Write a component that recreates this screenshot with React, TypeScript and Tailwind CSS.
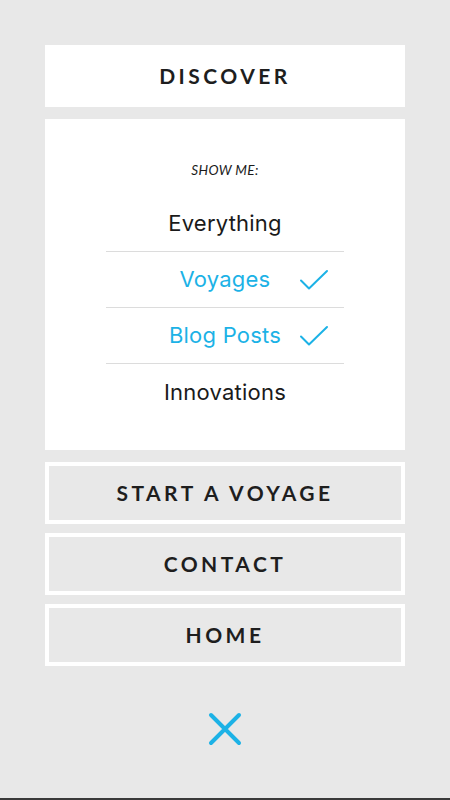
import React from "react";

const font = { fontFamily: "Lato, 'Open Sans', 'Liberation Sans', sans-serif" };
const rowFont = { fontFamily: "Inter, 'Open Sans', 'Liberation Sans', sans-serif", letterSpacing: "0.01em" };

function Check() {
  return (
    <svg width="30" height="22" viewBox="0 0 30 22" fill="none" className="absolute right-[15px] top-1/2 -translate-y-1/2">
      <path d="M2 11.5 L10 19.5 L28 2" stroke="#1cb2e6" strokeWidth="2" strokeLinecap="round" strokeLinejoin="round" />
    </svg>
  );
}

function Row({ label, active, last }: { label: string; active?: boolean; last?: boolean }) {
  return (
    <div className={`relative h-[56px] flex items-center justify-center ${last ? "" : "border-b border-[#dcdcdc]"}`}>
      <span className={`text-[22px] ${active ? "text-[#1cb2e6]" : "text-[#1a1a1a]"}`} style={rowFont}>
        {label}
      </span>
      {active && <Check />}
    </div>
  );
}

function NavButton({ label }: { label: string }) {
  return (
    <div className="h-[62px] border-[4px] border-white bg-[#e8e8e8] flex items-center justify-center">
      <span className="text-[21px] font-bold tracking-[0.165em] text-[#1e1e1e]">{label}</span>
    </div>
  );
}

export default function App() {
  return (
    <div className="h-[800px] w-[450px] bg-[#e8e8e8] border-b-2 border-[#3a3a3a] box-border overflow-hidden" style={font}>
      <div className="mx-[45px] pt-[45px] flex flex-col">
        <div className="h-[62px] bg-white flex items-center justify-center">
          <span className="text-[21px] font-bold tracking-[0.165em] text-[#1e1e1e]">DISCOVER</span>
        </div>
        <div className="mt-[12px] h-[331px] bg-white flex flex-col items-center pt-[43px]">
          <div className="text-[13.5px] leading-[16px] italic text-[#1a1a1a] tracking-[0.03em]">SHOW ME:</div>
          <div className="mt-[18px] w-[238px] flex flex-col">
            <Row label="Everything" />
            <Row label="Voyages" active />
            <Row label="Blog Posts" active />
            <Row label="Innovations" last />
          </div>
        </div>
        <div className="mt-[12px] flex flex-col gap-[9px]">
          <NavButton label="START A VOYAGE" />
          <NavButton label="CONTACT" />
          <NavButton label="HOME" />
        </div>
        <div className="mt-[46px] flex justify-center">
          <svg width="34" height="34" viewBox="0 0 34 34" fill="none">
            <path d="M3 3 L31 31 M31 3 L3 31" stroke="#1cb2e6" strokeWidth="4" strokeLinecap="round" />
          </svg>
        </div>
      </div>
    </div>
  );
}
